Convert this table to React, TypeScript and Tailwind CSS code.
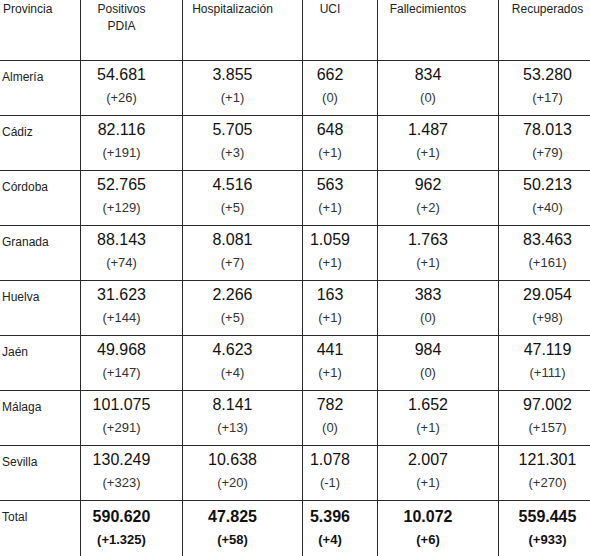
const rows = [
  { name: "Almería", v: ["54.681", "3.855", "662", "834", "53.280"], d: ["(+26)", "(+1)", "(0)", "(0)", "(+17)"] },
  { name: "Cádiz", v: ["82.116", "5.705", "648", "1.487", "78.013"], d: ["(+191)", "(+3)", "(+1)", "(+1)", "(+79)"] },
  { name: "Córdoba", v: ["52.765", "4.516", "563", "962", "50.213"], d: ["(+129)", "(+5)", "(+1)", "(+2)", "(+40)"] },
  { name: "Granada", v: ["88.143", "8.081", "1.059", "1.763", "83.463"], d: ["(+74)", "(+7)", "(+1)", "(+1)", "(+161)"] },
  { name: "Huelva", v: ["31.623", "2.266", "163", "383", "29.054"], d: ["(+144)", "(+5)", "(+1)", "(0)", "(+98)"] },
  { name: "Jaén", v: ["49.968", "4.623", "441", "984", "47.119"], d: ["(+147)", "(+4)", "(+1)", "(0)", "(+111)"] },
  { name: "Málaga", v: ["101.075", "8.141", "782", "1.652", "97.002"], d: ["(+291)", "(+13)", "(0)", "(+1)", "(+157)"] },
  { name: "Sevilla", v: ["130.249", "10.638", "1.078", "2.007", "121.301"], d: ["(+323)", "(+20)", "(-1)", "(+1)", "(+270)"] },
];

const total = {
  name: "Total",
  v: ["590.620", "47.825", "5.396", "10.072", "559.445"],
  d: ["(+1.325)", "(+58)", "(+4)", "(+6)", "(+933)"],
};

const headers = [["Positivos", "PDIA"], ["Hospitalización"], ["UCI"], ["Fallecimientos"], ["Recuperados"]];

const line = "border-[#2a2a2a]";

function Row({ name, v, d, bold = false }: { name: string; v: string[]; d: string[]; bold?: boolean }) {
  return (
    <>
      <div className={`h-[55px] border-r ${line} ${bold ? "" : "border-b"} pl-[2px] pt-[8px] text-[12px] leading-[16px] text-[#222]`}>
        {name}
      </div>
      {v.map((val, i) => (
        <div
          key={i}
          className={`h-[55px] ${i < 4 ? `border-r ${line}` : ""} ${bold ? "" : `border-b ${line}`} pr-5 ${bold ? "pt-[7px] font-bold" : "pt-[5px]"} text-center`}
        >
          <div className="text-[16px] leading-[18px] text-[#111]">{val}</div>
          <div className={`mt-[5px] text-[13px] leading-[18px] ${bold ? "text-[#111]" : "text-[#333]"}`}>{d[i]}</div>
        </div>
      ))}
    </>
  );
}

export default function App() {
  return (
    <div className="w-[590px] h-[556px] overflow-hidden bg-white" style={{ fontFamily: '"Liberation Sans", Arial, sans-serif' }}>
      <div className="grid w-[616px] grid-cols-[81px_102px_120px_75px_121px_117px]">
        {/* header */}
        <div className={`h-[61px] border-r border-b ${line} pl-[3px] pt-[1px] text-[12px] leading-[16px] text-[#222]`}>Provincia</div>
        {headers.map((h, i) => (
          <div
            key={i}
            className={`h-[61px] ${i < 4 ? "border-r" : ""} border-b ${line} pr-5 pt-[1px] text-center text-[12px] leading-[16.5px] text-[#222]`}
          >
            {h.map((t) => (
              <div key={t}>{t}</div>
            ))}
          </div>
        ))}

        {rows.map((r) => (
          <Row key={r.name} {...r} />
        ))}
        <Row {...total} bold />
      </div>
    </div>
  );
}
